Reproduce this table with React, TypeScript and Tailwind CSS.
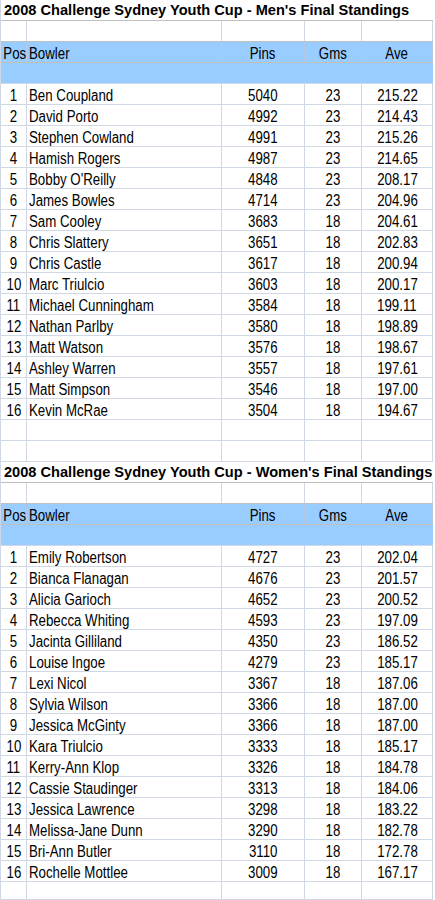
import React from 'react'

type Row = [number, string, number, number, string]

const men: Row[] = [
  [1, 'Ben Coupland', 5040, 23, '215.22'],
  [2, 'David Porto', 4992, 23, '214.43'],
  [3, 'Stephen Cowland', 4991, 23, '215.26'],
  [4, 'Hamish Rogers', 4987, 23, '214.65'],
  [5, "Bobby O'Reilly", 4848, 23, '208.17'],
  [6, 'James Bowles', 4714, 23, '204.96'],
  [7, 'Sam Cooley', 3683, 18, '204.61'],
  [8, 'Chris Slattery', 3651, 18, '202.83'],
  [9, 'Chris Castle', 3617, 18, '200.94'],
  [10, 'Marc Triulcio', 3603, 18, '200.17'],
  [11, 'Michael Cunningham', 3584, 18, '199.11'],
  [12, 'Nathan Parlby', 3580, 18, '198.89'],
  [13, 'Matt Watson', 3576, 18, '198.67'],
  [14, 'Ashley Warren', 3557, 18, '197.61'],
  [15, 'Matt Simpson', 3546, 18, '197.00'],
  [16, 'Kevin McRae', 3504, 18, '194.67'],
]

const women: Row[] = [
  [1, 'Emily Robertson', 4727, 23, '202.04'],
  [2, 'Bianca Flanagan', 4676, 23, '201.57'],
  [3, 'Alicia Garioch', 4652, 23, '200.52'],
  [4, 'Rebecca Whiting', 4593, 23, '197.09'],
  [5, 'Jacinta Gilliland', 4350, 23, '186.52'],
  [6, 'Louise Ingoe', 4279, 23, '185.17'],
  [7, 'Lexi Nicol', 3367, 18, '187.06'],
  [8, 'Sylvia Wilson', 3366, 18, '187.00'],
  [9, 'Jessica McGinty', 3366, 18, '187.00'],
  [10, 'Kara Triulcio', 3333, 18, '185.17'],
  [11, 'Kerry-Ann Klop', 3326, 18, '184.78'],
  [12, 'Cassie Staudinger', 3313, 18, '184.06'],
  [13, 'Jessica Lawrence', 3298, 18, '183.22'],
  [14, 'Melissa-Jane Dunn', 3290, 18, '182.78'],
  [15, 'Bri-Ann Butler', 3110, 18, '172.78'],
  [16, 'Rochelle Mottlee', 3009, 18, '167.17'],
]

// excel-ish tall narrow text: arial at 16px squeezed horizontally
const cell = 'h-full shrink-0 border-r leading-[23px] whitespace-nowrap overflow-hidden'
const mid = 'inline-block scale-x-[0.83] origin-center'
const left = 'inline-block scale-x-[0.83] origin-left'

function Cells({ c, line }: { c: (string | number)[]; line: string }) {
  return (
    <>
      <div className={`${cell} w-[26px] ${line} text-center`}>
        <span className={mid}>{c[0]}</span>
      </div>
      <div className={`${cell} w-[195px] ${line} pl-[2px]`}>
        <span className={left}>{c[1]}</span>
      </div>
      <div className={`${cell} w-[83px] ${line} text-center`}>
        <span className={mid}>{c[2]}</span>
      </div>
      <div className={`${cell} w-[57px] ${line} text-center`}>
        <span className={mid}>{c[3]}</span>
      </div>
      <div className={`${cell} w-[71px] ${line} text-center`}>
        <span className={mid}>{c[4]}</span>
      </div>
    </>
  )
}

function GridRow({ cells, last, bottom }: { cells?: (string | number)[]; last?: boolean; bottom?: string }) {
  return (
    <div className={`flex border-b ${bottom ?? 'border-[#D0D7E5]'} ${last ? 'h-[18px]' : 'h-[21px]'}`}>
      <Cells c={cells ?? ['', '', '', '', '']} line="border-r-[#D0D7E5]" />
    </div>
  )
}

function Title({ text }: { text: string }) {
  return (
    <div className="h-[21px] border-b border-[#BFBFBF] pl-[3px] font-['Liberation_Sans',sans-serif] text-[14.6px] font-bold leading-[21px] whitespace-nowrap text-black">
      {text}
    </div>
  )
}

function Header() {
  return (
    <>
      <div className="flex h-[21px] border-b border-[#C0C0C0] bg-[#99CCFF]">
        <Cells c={['Pos', 'Bowler', 'Pins', 'Gms', 'Ave']} line="border-r-[#B4C8E4]" />
      </div>
      <div className="h-[21px] border-b border-[#D0D7E5] bg-[#99CCFF]" />
    </>
  )
}

function Section({ title, rows, tail }: { title: string; rows: Row[]; tail: number }) {
  return (
    <div>
      <Title text={title} />
      <GridRow bottom="border-b-[#C0C0C0]" />
      <Header />
      {rows.map((r) => (
        <GridRow key={r[0]} cells={r} />
      ))}
      {Array.from({ length: tail }).map((_, i) => (
        <GridRow key={'e' + i} last={tail === 1} />
      ))}
    </div>
  )
}

export default function App() {
  return (
    <div className="h-[900px] w-[435px] overflow-hidden bg-white">
      <div className="w-[433px] border-l border-[#D0D7E5] font-['Liberation_Sans',sans-serif] text-[16px] text-black">
        <Section title="2008 Challenge Sydney Youth Cup - Men's Final Standings" rows={men} tail={2} />
        <Section title="2008 Challenge Sydney Youth Cup - Women's Final Standings" rows={women} tail={1} />
      </div>
    </div>
  )
}
